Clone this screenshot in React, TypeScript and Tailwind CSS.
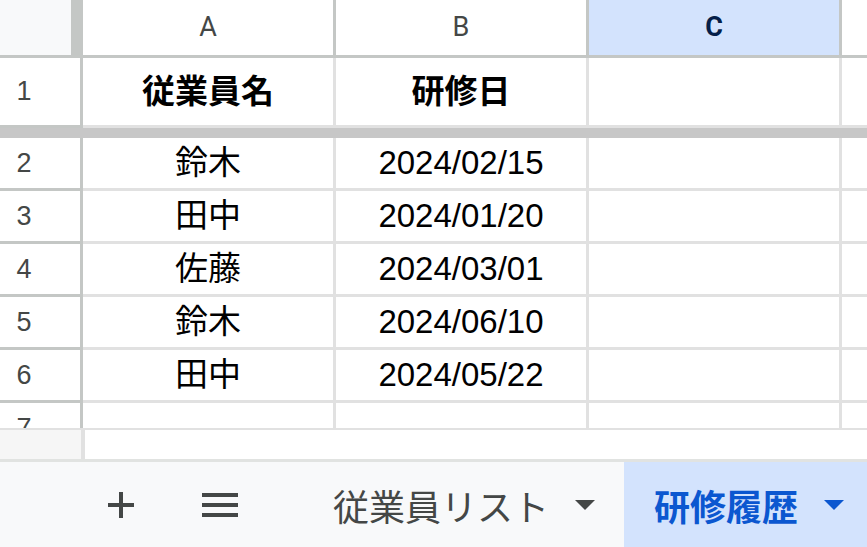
import React from 'react';

const cols = ['A', 'B', 'C'];

const rows: { n: number; a: string; b: string }[] = [
  { n: 2, a: '鈴木', b: '2024/02/15' },
  { n: 3, a: '田中', b: '2024/01/20' },
  { n: 4, a: '佐藤', b: '2024/03/01' },
  { n: 5, a: '鈴木', b: '2024/06/10' },
  { n: 6, a: '田中', b: '2024/05/22' },
  { n: 7, a: '', b: '' },
];

const cellFont = { fontFamily: '"Liberation Sans", "Noto Sans CJK JP", sans-serif' };

function DataRow({ n, a, b, height, bold }: { n: number; a: string; b: string; height: string; bold?: boolean }) {
  return (
    <div className={`flex ${height} shrink-0`}>
      <div className="w-[80px] shrink-0 flex items-center">
        <span className="w-[48px] text-center text-[27px] text-[#444746]">{n}</span>
      </div>
      <div className="w-[3px] shrink-0 bg-[#c4c7c5]" />
      <div className={`w-[250px] shrink-0 flex items-center justify-center text-[33px] text-black ${bold ? 'font-bold' : ''}`}>{a}</div>
      <div className="w-[3px] shrink-0 bg-[#e1e1e1]" />
      <div className={`w-[250px] shrink-0 flex items-center justify-center text-[33px] text-black ${bold ? 'font-bold' : ''}`}>{b}</div>
      <div className="w-[3px] shrink-0 bg-[#e1e1e1]" />
      <div className="w-[250px] shrink-0" />
      <div className="w-[3px] shrink-0 bg-[#e1e1e1]" />
      <div className="flex-1" />
    </div>
  );
}

function RowLine() {
  return (
    <div className="flex h-[3px] shrink-0">
      <div className="w-[83px] shrink-0 bg-[#c4c7c5]" />
      <div className="flex-1 bg-[#e1e1e1]" />
    </div>
  );
}

function Triangle({ color }: { color: string }) {
  return (
    <svg width="20" height="10" viewBox="0 0 20 10">
      <polygon points="0,0 20,0 10,10" fill={color} />
    </svg>
  );
}

export default function App() {
  return (
    <div className="w-[867px] h-[547px] overflow-hidden bg-white flex flex-col" style={cellFont}>
      {/* grid */}
      <div className="h-[428px] shrink-0 overflow-hidden flex flex-col">
        {/* column headers */}
        <div className="flex h-[55px] shrink-0">
          <div className="w-[71px] shrink-0 bg-[#f8f9fa]" />
          <div className="w-[12px] shrink-0 bg-[#c4c7c5]" />
          {cols.map((c) => (
            <React.Fragment key={c}>
              <div
                className={`w-[250px] shrink-0 flex items-center justify-center text-[27px] ${
                  c === 'C' ? 'bg-[#d3e3fd] text-[#041e49] font-bold' : 'bg-white text-[#444746]'
                }`}
                style={{ fontFamily: 'Roboto, "Liberation Sans", sans-serif' }}
              >
                {c}
              </div>
              <div className="w-[3px] shrink-0 bg-[#c4c7c5]" />
            </React.Fragment>
          ))}
          <div className="flex-1" />
        </div>
        <div className="h-[3px] shrink-0 bg-[#c4c7c5]" />

        <DataRow n={1} a="従業員名" b="研修日" height="h-[67px]" bold />
        <RowLine />
        <div className="h-[10px] shrink-0 bg-[#c7c7c7]" />

        {rows.map((r) => (
          <React.Fragment key={r.n}>
            <DataRow n={r.n} a={r.a} b={r.b} height="h-[50px]" />
            <RowLine />
          </React.Fragment>
        ))}
      </div>

      {/* horizontal scroll strip */}
      <div className="h-[2px] shrink-0 bg-[#e1e1e1]" />
      <div className="flex h-[29px] shrink-0">
        <div className="w-[81px] shrink-0 bg-[#f6f6f6]" />
        <div className="w-[4px] shrink-0 bg-[#e1e1e1]" />
        <div className="flex-1 bg-white" />
      </div>
      <div className="h-[3px] shrink-0 bg-[#e1e3e1]" />

      {/* sheet tabs */}
      <div className="flex-1 flex items-stretch bg-[#f8f9fa]" style={{ fontFamily: '"Noto Sans CJK JP", "Liberation Sans", sans-serif' }}>
        <div className="flex items-center pl-[108px]">
          <svg width="26" height="26" viewBox="0 0 26 26">
            <rect x="11" y="0" width="4" height="26" fill="#444746" />
            <rect x="0" y="11" width="26" height="4" fill="#444746" />
          </svg>
          <svg className="ml-[68px]" width="36" height="24" viewBox="0 0 36 24">
            <rect x="0" y="0" width="36" height="4" fill="#444746" />
            <rect x="0" y="10" width="36" height="4" fill="#444746" />
            <rect x="0" y="20" width="36" height="4" fill="#444746" />
          </svg>
        </div>
        <div className="flex items-center pl-[95px] w-[386px] shrink-0">
          <span className="text-[36px] text-[#444746] leading-none">従業員リスト</span>
          <span className="ml-auto mr-[29px] flex">
            <Triangle color="#444746" />
          </span>
        </div>
        <div className="flex-1 flex items-center bg-[#d3e3fd] pl-[30px]">
          <span className="text-[36px] font-bold text-[#0b57d0] leading-none">研修履歴</span>
          <span className="ml-auto mr-[23px] flex">
            <Triangle color="#0b57d0" />
          </span>
        </div>
      </div>
    </div>
  );
}
